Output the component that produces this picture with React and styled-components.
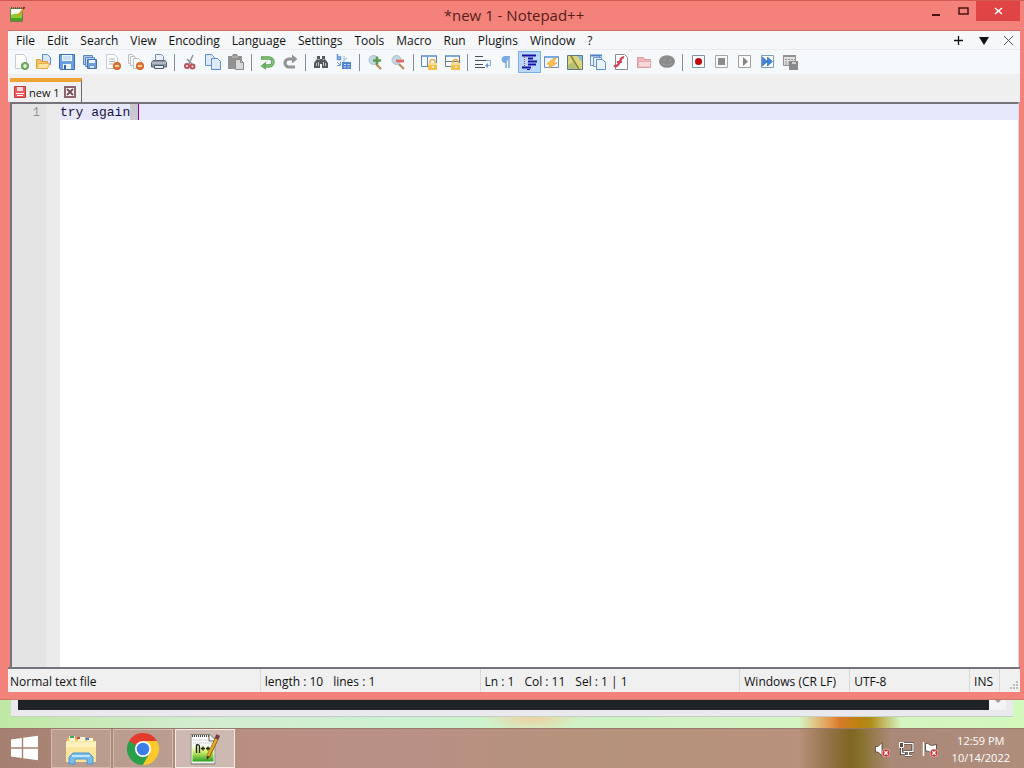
import React from 'react';
import styled, { createGlobalStyle, css } from 'styled-components';

const GlobalStyle = createGlobalStyle`
  * { box-sizing: border-box; }
  body {
    margin: 0;
    font-family: "Open Sans", "Noto Sans", sans-serif;
    font-size: 12px;
    color: #111;
  }
  button, textarea {
    font: inherit;
    color: inherit;
    margin: 0;
    padding: 0;
    border: 0;
    background: none;
  }
`;

/* ---------- desktop and window frame ---------- */

const Desktop = styled.div`
  display: flex;
  flex-direction: column;
  min-height: 100vh;
`;

const AppWindow = styled.main`
  flex: 1;
  display: flex;
  flex-direction: column;
  padding: 0 4px 7px 8px;
  background: #f3837a;
  border-top: 1px solid #cf5b52;
  border-bottom: 1px solid #cb7a68;
`;

const TitleBar = styled.header`
  display: grid;
  grid-template-columns: 1fr auto 1fr;
  height: 30px;
  border-bottom: 1px solid #cb6f66;
`;

const AppIcon = styled.span`
  display: flex;
  padding: 5px 0 0 1px;
`;

const Title = styled.h1`
  margin: 0;
  font-size: 15px;
  line-height: 28px;
  font-weight: 400;
  color: #551e1a;
`;

const WindowControls = styled.div`
  display: flex;
  justify-content: flex-end;
  align-items: flex-start;
`;

const WindowButton = styled.button`
  display: grid;
  place-items: center;
  width: ${(p) => (p.$close ? 44 : 27)}px;
  height: 20px;
  background: ${(p) => (p.$close ? '#e04444' : 'transparent')};
`;

/* ---------- menu, toolbar, tabs ---------- */

const MenuBar = styled.nav`
  display: flex;
  height: 19px;
  padding-left: 2px;
  background: #f6f7f8;
  border-bottom: 1px solid #e9ebee;
`;

const MenuItem = styled.button`
  padding: 0 6px;
  line-height: 20px;
`;

const MenuActions = styled.div`
  display: flex;
  margin-left: auto;
`;

const MenuAction = styled.button`
  display: grid;
  place-items: center;
  width: 25px;
`;

const Toolbar = styled.div`
  display: flex;
  align-items: center;
  height: 24px;
  padding-left: 2px;
  background: #f5f9fb;
`;

const ToolButton = styled.button`
  display: grid;
  place-items: center;
  width: 23px;
  height: 22px;
  padding-right: 1px;
  border: 1px solid transparent;
  ${(p) =>
    p.$pressed &&
    css`
      border-color: #79aee8;
      background: #b9d7fb;
    `}
`;

const ToolSeparator = styled.span`
  width: 8px;
  height: 17px;
  background: linear-gradient(#8a8d90, #8a8d90) 3px 0 / 1px 100% no-repeat;
`;

const TabBar = styled.div`
  display: flex;
  align-items: flex-end;
  height: 28px;
  padding-left: 2px;
  background: #efefef;
`;

const Tab = styled.div`
  display: flex;
  align-items: center;
  gap: 4px;
  height: 24px;
  padding: 0 5px 0 4px;
  background: #f1f1f1;
  border-top: 4px solid #f0a233;
  border-right: 1px solid #66686c;
  font-size: 11px;
`;

const TabLabel = styled.button`
  display: flex;
  align-items: center;
  gap: 3px;
`;

const TabClose = styled.button`
  display: flex;
`;

/* ---------- editor ---------- */

const EditorFrame = styled.section`
  flex: 1;
  display: flex;
  margin: 0 1px 0 2px;
  border: solid #74747a;
  border-width: 2px 1px 0 2px;
  border-right-color: #dcdcdc;
  background: #fff;
`;

const Gutter = styled.div`
  display: flex;
  width: 48px;
  padding-top: 1px;
  background: linear-gradient(90deg, #e4e4e4 34px, #ebebeb 34px);
  font-family: "Liberation Mono", monospace;
  font-size: 12px;
  line-height: 16px;
  color: #949494;
`;

const LineNumbers = styled.span`
  width: 28px;
  text-align: right;
`;

const TextPane = styled.div`
  position: relative;
  flex: 1;
  display: flex;
  font-family: "Liberation Mono", monospace;
  font-size: 13px;
  line-height: 16px;
  background: linear-gradient(#e8e8fd, #e8e8fd) top / 100% 16px no-repeat;
`;

const Selection = styled.span`
  position: absolute;
  top: 0;
  left: 9ch;
  width: 1ch;
  height: 16px;
  background: #c8c8ce;
`;

const Caret = styled.span`
  position: absolute;
  top: 0;
  left: 10ch;
  width: 1px;
  height: 16px;
  background: #8a00b0;
`;

const TextArea = styled.textarea`
  position: relative;
  flex: 1;
  padding-top: 1px;
  resize: none;
  outline: none;
  color: #15153a;
  caret-color: transparent;
`;

/* ---------- status bar ---------- */

const StatusBar = styled.footer`
  display: flex;
  height: 25px;
  background: #f0f0f0;
  border-top: 2px solid #74747a;
`;

const StatusPane = styled.span`
  display: flex;
  gap: 10px;
  width: ${(p) => p.$width}px;
  padding-left: ${(p) => (p.$grow ? 2 : 4)}px;
  line-height: 25px;
  white-space: nowrap;
  ${(p) => p.$grow && 'flex: 1 1 auto;'}
  border-right: 1px solid #dadada;
`;

const SizeGrip = styled.span`
  display: flex;
  justify-content: flex-end;
  align-items: flex-end;
  width: 20px;
`;

/* ---------- window behind ---------- */

const Backdrop = styled.div`
  height: 28px;
  padding: 0 11px;
  background:
    radial-gradient(ellipse 50px 14px at 52% 18px, #efd0a0, transparent),
    linear-gradient(90deg, transparent 78%, #e49a50 81%, #d87a28 82%, #b98410 84%, #b08c18 85%, transparent 88%),
    linear-gradient(90deg, #bfe8a4, #d3ecd0 20%, #cdf2d2 40%, #cff3c4 60%, #d6f5c4 80%, #d2f8bc);
`;

const RearWindow = styled.div`
  display: flex;
  height: 17px;
  padding: 0 7px 6px;
  background: #eae9ee;
  border-bottom: 1px solid #c6cdc6;
`;

const RearContent = styled.div`
  flex: 1;
  background: #1f2227;
`;

const RearScroll = styled.div`
  display: flex;
  justify-content: center;
  width: 17px;
  background: #f4f4f6;
`;

/* ---------- taskbar ---------- */

const Taskbar = styled.footer`
  display: flex;
  gap: 2px;
  height: 40px;
  border-top: 1px solid #98796c;
  background:
    linear-gradient(90deg, transparent 78%, #937248 81%, #806622 83%, #85702c 84%, transparent 87%),
    linear-gradient(90deg, #a58070, #b98f82 25%, #b99084 40%, #b5927a 60%, #b9917c 80%, #a98878 88%, #b08e7c);
`;

const StartButton = styled.button`
  display: grid;
  place-items: center;
  width: 49px;
`;

const TaskButton = styled.button`
  display: grid;
  place-items: center;
  width: 60px;
  border: 1px solid ${(p) => (p.$active ? '#f3ece6' : '#d3bbae')};
  background: ${(p) => (p.$active ? '#cdb9b2' : '#bb9d8f')};
`;

const Tray = styled.div`
  display: flex;
  align-items: center;
  gap: 8px;
  margin-left: auto;
  padding-right: 14px;
`;

const TrayButton = styled.button`
  display: flex;
`;

const Clock = styled.time`
  margin-left: 6px;
  color: #fff;
  font-size: 11px;
  line-height: 17px;
  text-align: center;
`;

/* ---------- drawings ---------- */

const Svg = ({ size = 16, box = 16, children }) => (
  <svg width={size} height={size} viewBox={`0 0 ${box} ${box}`} fill="none" aria-hidden="true">
    {children}
  </svg>
);

const page = (x, y, w, h, fill = '#fff', stroke = '#5b8fd0') => (
  <path d={`M${x + 0.5} ${y + 0.5}h${w - 4}l3 3v${h - 4}h-${w - 1}z`} fill={fill} stroke={stroke} />
);

const minusBadge = (
  <>
    <circle cx="12" cy="12" r="3.8" fill="#e0702a" stroke="#b95418" strokeWidth=".6" />
    <path d="M10 12h4" stroke="#fff" strokeWidth="1.3" />
  </>
);

const lock = (
  <>
    <path d="M9 10V8a2.500 2.500 0 0 1 5 0v2" stroke="#dfb044" strokeWidth="1.500" />
    <path d="M7 9h9v7H7z" fill="#f5bf4c" />
    <path d="M7 10h9" stroke="#fbdc8c" strokeWidth="2" />
    <path d="M11 12h2v2h-2z" fill="#fff0c0" />
  </>
);

const magnifier = (
  <>
    <path d="m9 10 5 5" stroke="#b98b58" strokeWidth="2.200" />
    <circle cx="6.500" cy="6" r="4.500" fill="#c3d6e6" stroke="#b0bfcc" />
  </>
);

const icons = {
  New: (
    <>
      {page(2, 0, 12, 15, '#fff', '#c5cbd2')}
      <circle cx="12" cy="12" r="3.600" fill="#79b765" stroke="#478b3c" strokeWidth=".8" />
      <path d="M10 12h4M12 10v4" stroke="#fff" strokeWidth="1.200" />
    </>
  ),
  Open: (
    <>
      {page(6, 0, 9, 11, '#d6e7fb')}
      <path d="M.5 14.500v-9h4l1 2h6v7z" fill="#f7ca67" stroke="#dc9b32" />
      <path d="m.5 14.500 2-5h11l-2 5z" fill="#ffe39a" stroke="#e5ae4c" />
    </>
  ),
  Save: (
    <>
      <path d="M.5.5h15v15H1.500l-1-1z" fill="#6aa0e0" stroke="#3a6fb8" />
      <path d="M3 1h10v6H3z" fill="#eef6ff" />
      <path d="M4 3h8M4 5h8" stroke="#a3c7ee" />
      <path d="M4 10h8v5H4z" fill="#eaf2fb" />
      <path d="M5 11h2v4H5z" fill="#34619e" />
    </>
  ),
  'Save All': (
    <>
      <path d="M1.500 1.500h9v9h-9z" fill="#a9c9f0" stroke="#5b8acb" />
      <path d="M3.500 3.500h9v9h-9z" fill="#c0d8f5" stroke="#5b8acb" />
      <path d="M5.500 5.500h9v9h-9z" fill="#6c9edc" stroke="#4272b4" />
      <path d="M7 6h6v3H7z" fill="#f0f7ff" />
      <path d="M8 12h4v2H8z" fill="#dbe8f7" />
    </>
  ),
  Close: (
    <>
      {page(1, 0, 12, 15, '#fff', '#c5cbd2')}
      <path d="M4 5h6M4 7.500h6M4 10h4" stroke="#aeb4ba" />
      {minusBadge}
    </>
  ),
  'Close All': (
    <>
      {page(0, 0, 8, 10, '#fff', '#b9bfc6')}
      {page(2, 2, 8, 10, '#fff', '#b9bfc6')}
      {page(5, 4, 9, 11, '#fff', '#b9bfc6')}
      {minusBadge}
    </>
  ),
  Print: (
    <>
      <path d="M4.500 7V.5h6l2 2V7" fill="#e9f2fc" stroke="#6f8fb8" />
      <path d="M2 6.500h12l1.500 2v4.500H.5V8.500z" fill="#8f9aa6" stroke="#5b6673" />
      <path d="M1 9h14" stroke="#d3d9df" />
      <path d="M3.500 11.500h9v3h-9z" fill="#e2ecf7" stroke="#4e5966" />
    </>
  ),
  Cut: (
    <>
      <path d="m11 1-4 9M5 5l5 5" stroke="#8b939b" strokeWidth="1.500" />
      <circle cx="5" cy="12" r="2" stroke="#b9505a" strokeWidth="2" />
      <circle cx="10.500" cy="12.500" r="2" stroke="#b9505a" strokeWidth="2" />
    </>
  ),
  Copy: (
    <>
      {page(0, 0, 10, 12, '#dceafa')}
      {page(6, 4, 10, 12, '#dceafa')}
    </>
  ),
  Paste: (
    <>
      <path d="M0 2h4l1-2h4l1 2h4v13H0z" fill="#929292" />
      <path d="M4 3h6" stroke="#c6c6c6" />
      <path d="M7.500 5.500h5l3 3v7h-8z" fill="#d8d8d8" stroke="#8a8a8a" />
      <path d="M12.500 5.500v3h3" stroke="#8a8a8a" />
    </>
  ),
  Undo: (
    <>
      <path d="M2 4h8a3.500 3.500 0 0 1 0 8H6" stroke="#5aa252" strokeWidth="3.400" />
      <path d="M3 4h7a3.500 3.500 0 0 1 0 8H6" stroke="#97cd8b" strokeWidth="1.200" />
      <path d="M7 7.500v8.500L1.500 12z" fill="#66b05c" />
    </>
  ),
  Redo: (
    <>
      <path d="M12 5H7a3.500 3.500 0 0 0 0 8h6" stroke="#949494" strokeWidth="3.200" />
      <path d="M10 .5v9L15.500 5z" fill="#949494" />
    </>
  ),
  Find: (
    <>
      <path d="M4 2h3v3h2V2h3v3l3 4v5H9v-4H7v4H1V9l3-4z" fill="#55585d" />
      <path d="M4.500 5.500h2M9.500 5.500h2M3.500 9v3M12.500 9v3M5.500 8v4M10.500 8v4" stroke="#bcc0c5" />
    </>
  ),
  Replace: (
    <>
      <path d="M1.500 0v5.500h3V3h-3" stroke="#5a8fd6" strokeWidth="1.500" />
      <path d="M8 10V2M8 6l3-2" stroke="#92b4e0" />
      <path d="M6 8h9v7H6z" fill="#5187d2" />
      <path d="M8 10.500h2M11.500 10.500h2M8 13h2M11.500 13h2" stroke="#cfe0f6" />
      <path d="m1 8 3 3M4.500 8v3.500H1" stroke="#6a97d6" />
    </>
  ),
  'Zoom In': (
    <>
      {magnifier}
      <path d="M6 6.500h8M10 2.500v8" stroke="#5c9c4c" strokeWidth="2.600" />
    </>
  ),
  'Zoom Out': (
    <>
      {magnifier}
      <path d="M6 7h8" stroke="#e26a62" strokeWidth="2.800" />
    </>
  ),
  'Synchronize Vertical Scrolling': (
    <>
      <path d="M.5 1.500h15v11H.5zM6.500 3v9" fill="#f7fbff" stroke="#5a86ba" />
      <path d="M1 2h14" stroke="#7da8dc" strokeWidth="2" />
      {lock}
    </>
  ),
  'Synchronize Horizontal Scrolling': (
    <>
      <path d="M1.500 1.500h14v11h-14zM2 7.500h13" fill="#f7fbff" stroke="#68798e" />
      <path d="M2 2h13" stroke="#7da8dc" strokeWidth="2" />
      {lock}
    </>
  ),
  'Word Wrap': (
    <>
      <path d="M0 2.500h8M0 6.500h11M0 10.500h8M0 13.500h10" stroke="#46505c" strokeWidth="1.200" />
      <path d="M11 6.500h4.500v5H11" stroke="#7da8d8" />
      <path d="m13 9-3 2.500 3 2.500z" fill="#6796cf" />
    </>
  ),
  'Show All Characters': (
    <>
      <path d="M12 2.500H7a3 3 0 0 0 0 6h1" fill="#78a9df" stroke="#78a9df" />
      <path d="M8 2v12M11 2v12" stroke="#78a9df" strokeWidth="1.500" />
    </>
  ),
  'Indent Guide': (
    <>
      <path d="M1 1.500h14M7 4.500h5M7 7.500h9M7 10.500h8M1 13.500h9" stroke="#1414a0" strokeWidth="1.800" />
      <path d="M3.500 3v10" stroke="#c43a5e" strokeDasharray="1 1" />
      <path d="M6 15.500h3" stroke="#1414a0" />
    </>
  ),
  'User Defined Language': (
    <>
      <path d="M.5 2.500h14v11H.5z" fill="#eef5fd" stroke="#6f8fb5" />
      <path d="M1 3h13" stroke="#74a8e8" strokeWidth="2" />
      <path d="m10 4-7 6h3l-1 4 8-5H9l3-5z" fill="#ffc34e" stroke="#f0a83c" />
    </>
  ),
  'Document Map': (
    <>
      <path d="M.5 1.500h15v14H.5z" fill="#ddd67c" stroke="#5f7888" />
      <path d="M10 2h5v6z" fill="#8bbad6" />
      <path d="M1 11 6 8l4 7H1z" fill="#b3c177" />
      <path d="m4 2 6 10 2 3" stroke="#85843f" strokeWidth="1.600" />
    </>
  ),
  'Document List': (
    <>
      <path d="M.5 1.500h9v10h-9z" fill="#e5f0fc" stroke="#6d98cf" />
      <path d="M3.500 3.500h8v9h-8z" fill="#e5f0fc" stroke="#6d98cf" />
      {page(6, 5, 10, 11, '#eaf3fd')}
      <path d="M0 1.500h12" stroke="#4c82ca" strokeWidth="2" />
    </>
  ),
  'Function List': (
    <>
      {page(2, 0, 13, 16, '#fff', '#8c8c8c')}
      <path d="M11 3.500c-3-1-3 2-4.500 5S3 13 1 11.500" stroke="#cf4456" strokeWidth="2.400" />
      <path d="M4 8h5" stroke="#cf4456" strokeWidth="2" />
    </>
  ),
  'Folder as Workspace': (
    <>
      <path d="M1.500 13.500v-10h6l1 2h6v8z" fill="#f1b7bc" stroke="#dc989e" />
      <path d="m2 13 1-5.500h12L14 13z" fill="#f9d8da" stroke="#dfa0a5" strokeWidth=".7" />
    </>
  ),
  Monitoring: (
    <>
      <ellipse cx="8" cy="7.500" rx="8" ry="6.300" fill="#8b8b8b" />
      <path d="M4 6h2M10 6h2M3 9.500c3 2 7 2 10 0" stroke="#a0a0a0" />
    </>
  ),
  'Start Recording': (
    <>
      <path d="M2.500 1.500h12v12h-12z" fill="#fff" stroke="#8192a3" />
      <circle cx="8.500" cy="7.500" r="3.500" fill="#c00808" />
    </>
  ),
  'Stop Recording': (
    <>
      <path d="M2.500 1.500h12v12h-12z" fill="#fafafa" stroke="#a7a7a7" />
      <path d="M5 4h7v7H5z" fill="#8c8c8c" />
    </>
  ),
  Playback: (
    <>
      <path d="M2.500 1.500h12v12h-12z" fill="#fafafa" stroke="#a0a0a0" />
      <path d="m7 3 5 4.500L7 12z" fill="#858585" />
    </>
  ),
  'Run Macro Multiple Times': (
    <>
      <path d="M2.500 1.500h12v12h-12z" fill="#fff" stroke="#7f9bbd" />
      <path d="m3.500 3 5 4.500-5 4.500zM8.500 3l5 4.500-5 4.500z" fill="#3f86dd" stroke="#2563b5" strokeWidth=".6" />
    </>
  ),
  'Save Recorded Macro': (
    <>
      <path d="M1.500 1.500h12v10h-12z" fill="#e2e2e2" stroke="#929292" />
      <path d="M1 2h13" stroke="#929292" strokeWidth="2" />
      <path d="M3 5.500h10M3 8h5M3 10h5" stroke="#929292" strokeDasharray="2 1" />
      <path d="M7 7h9v9H7z" fill="#8a8a8a" />
      <path d="M10 8h4v2h-4z" fill="#d0d0d0" />
    </>
  ),
};

const toolGroups = [
  ['New', 'Open', 'Save', 'Save All', 'Close', 'Close All', 'Print'],
  ['Cut', 'Copy', 'Paste'],
  ['Undo', 'Redo'],
  ['Find', 'Replace'],
  ['Zoom In', 'Zoom Out'],
  ['Synchronize Vertical Scrolling', 'Synchronize Horizontal Scrolling'],
  [
    'Word Wrap', 'Show All Characters', 'Indent Guide', 'User Defined Language', 'Document Map',
    'Document List', 'Function List', 'Folder as Workspace', 'Monitoring',
  ],
  ['Start Recording', 'Stop Recording', 'Playback', 'Run Macro Multiple Times', 'Save Recorded Macro'],
];

const menus = [
  'File', 'Edit', 'Search', 'View', 'Encoding', 'Language', 'Settings',
  'Tools', 'Macro', 'Run', 'Plugins', 'Window', '?',
];

const NotepadSmall = () => (
  <Svg size={17} box={17}>
    <path d="M1.500 2.500h12v13h-12z" fill="#f6faee" stroke="#6c7a54" />
    <path d="M2 9c4-2 7-1 11-2v8H2z" fill="#8dcc2e" />
    <path d="M2 12h11v3H2z" fill="#4f9f22" />
    <path d="M2 2h11" stroke="#566044" strokeDasharray="1 1" strokeWidth="2" />
    <path d="m9 10 6-8" stroke="#d89b28" strokeWidth="2" />
    <path d="m14 3 1.500-2" stroke="#6d2e2e" strokeWidth="2" />
  </Svg>
);

const NotepadLarge = () => (
  <Svg size={32} box={32}>
    <defs>
      <linearGradient id="sheet" x1="0" y1="0" x2="0" y2="1">
        <stop offset=".35" stopColor="#fff" />
        <stop offset=".6" stopColor="#d6ef68" />
        <stop offset="1" stopColor="#189a1c" />
      </linearGradient>
    </defs>
    <path d="M2.500 2.500h18l5 5v22h-23z" fill="url(#sheet)" stroke="#f4f4f4" strokeWidth="2" />
    <path d="M2 1.500h19l5 5V31H2z" stroke="#55604c" strokeWidth=".7" />
    <path d="M3 3h17" stroke="#444" strokeDasharray="1 1" strokeWidth="2" />
    <path d="M4 7h15M4 10h19" stroke="#ccd2cc" />
    <path d="M20 2v6h6" fill="#eee" stroke="#666" />
    <path d="M7.500 20v-8q3-1 3 2v6M12 15.500h4M14 13.500v4M17 15.500h4M19 13.500v4" stroke="#1c2a16" strokeWidth="1.400" />
    <path d="m19 24 9-19" stroke="#8b641c" strokeWidth="4" />
    <path d="m19 23 9-18" stroke="#e7ac25" strokeWidth="2.400" />
    <path d="m27.500 6 1.700-4" stroke="#70414a" strokeWidth="4" />
    <path d="m17.500 27 .5-4 2.500 1z" fill="#3b2b15" />
  </Svg>
);

const Explorer = () => (
  <Svg size={32} box={32}>
    <path d="M2 5h9l2 2h16v22H2z" fill="#e8c565" />
    <path d="M4 3h6v5H4zM13 4h7v5h-7zM22 5h6v5h-6z" fill="#fff6d2" />
    <path d="M5 3h4v2H5z" fill="#3aa84c" />
    <path d="M12 4h3v2h-3z" fill="#d64c3a" />
    <path d="M21 5h3v2h-3z" fill="#3c86cf" />
    <path d="M1 8h30v21H1z" fill="#f9e69c" />
    <path d="M1 9h30v5H1z" fill="#fcf0bc" />
    <path d="M4 31v-7l4-4h16l4 4v7h-6v-5H10v5z" fill="#78bdea" stroke="#4a96cf" />
    <path d="M7 23h18" stroke="#c0e4f9" strokeWidth="2" />
  </Svg>
);

const Chrome = () => (
  <Svg size={32} box={32}>
    <path d="M16 16 2.140 8A16 16 0 0 1 29.860 8z" fill="#e33b2e" />
    <path d="M16 16 29.860 8A16 16 0 0 1 16 32z" fill="#fcc92a" />
    <path d="M16 16V32A16 16 0 0 1 2.140 8z" fill="#2c9f4b" />
    <path d="M16 8h13.860L22.930 20z" fill="#fcc92a" />
    <path d="M22.930 20 16 32 9.070 20z" fill="#2c9f4b" />
    <path d="M2.140 8 9.070 20 16 8z" fill="#2c9f4b" />
    <path d="M2.140 8H16L9.070 12z" fill="#e33b2e" />
    <path d="M22.930 20 16 32h2l10-8z" fill="#fcc92a" />
    <circle cx="16" cy="16" r="8" fill="#fff" />
    <circle cx="16" cy="16" r="6.300" fill="#3b7de9" />
  </Svg>
);

const WindowsLogo = () => (
  <Svg size={28} box={28}>
    <path d="M0 4.500 10.800 3v9.300H0zM12.200 2.800 27 .8v11.500H12.200zM0 13.700h10.800V23L0 21.500zM12.200 13.700H27v11.500l-14.800-2z" fill="#fff" />
  </Svg>
);

const errorBadge = (
  <>
    <circle cx="12" cy="12" r="4" fill="#c93436" stroke="#f3dada" strokeWidth=".6" />
    <path d="m10.300 10.300 3.400 3.400M13.700 10.300l-3.400 3.400" stroke="#fff" strokeWidth="1.300" />
  </>
);

const trayIcons = [
  ['Speakers', <><path d="M1.500 5.500H4L8 1.500v13L4 11H1.500z" fill="#fff" stroke="#4a3d35" strokeWidth=".8" />{errorBadge}</>],
  ['Network', (
    <>
      <path d="M5.500 2.500h9.500v8H5.500M10.500 11v3M7 14.500h7M3.500 6v6.500H8" stroke="#3f342e" strokeWidth="3" />
      <path d="M6 2.500h9v8H5.500M10.500 11v3M7 14.500h7M3.500 6v6.500H7" stroke="#fff" strokeWidth="1.300" />
      <path d="M1.500 1.500h4v5h-4z" fill="#5a4c44" stroke="#fff" />
    </>
  )],
  ['Action Center', (
    <>
      <path d="M1.500 1v14" stroke="#fff" strokeWidth="1.500" />
      <path d="M3.500 2.500c3-1 4 2 6 2s3-1 5-1v7c-3 0-3 1-5 1s-3-2-6-1.500z" fill="#fff" stroke="#4a3d35" strokeWidth=".8" />
      {errorBadge}
    </>
  )],
];

export default function App() {
  return (
    <Desktop>
      <GlobalStyle />
      <AppWindow>
        <TitleBar>
          <AppIcon><NotepadSmall /></AppIcon>
          <Title>*new 1 - Notepad++</Title>
          <WindowControls>
            <WindowButton aria-label="Minimize">
              <Svg><path d="M4 11h8v2H4z" fill="#4a1612" /></Svg>
            </WindowButton>
            <WindowButton aria-label="Maximize">
              <Svg><path d="M4 5h9v6H4z" stroke="#4a1612" strokeWidth="1.500" /></Svg>
            </WindowButton>
            <WindowButton $close aria-label="Close">
              <Svg><path d="m5 5 7 6M12 5l-7 6" stroke="#fff" strokeWidth="1.600" /></Svg>
            </WindowButton>
          </WindowControls>
        </TitleBar>

        <MenuBar aria-label="Menu">
          {menus.map((name) => <MenuItem key={name}>{name}</MenuItem>)}
          <MenuActions>
            <MenuAction aria-label="New tab">
              <Svg><path d="M4 8.500h9M8.500 4v9" stroke="#111" strokeWidth="1.300" /></Svg>
            </MenuAction>
            <MenuAction aria-label="Tab list">
              <Svg><path d="M4 5h10l-5 8z" fill="#111" /></Svg>
            </MenuAction>
            <MenuAction aria-label="Close tab">
              <Svg><path d="m4 4 9 9M13 4l-9 9" stroke="#555" /></Svg>
            </MenuAction>
          </MenuActions>
        </MenuBar>

        <Toolbar role="toolbar" aria-label="Tools">
          {toolGroups.map((group, i) => (
            <React.Fragment key={group[0]}>
              {i > 0 && <ToolSeparator />}
              {group.map((name) => (
                <ToolButton key={name} aria-label={name} $pressed={name === 'Indent Guide'}>
                  <Svg>{icons[name]}</Svg>
                </ToolButton>
              ))}
            </React.Fragment>
          ))}
        </Toolbar>

        <TabBar>
          <Tab>
            <TabLabel>
              <Svg size={12} box={12}>
                <path d="M.5.5h11v11H.5z" fill="#ee5b5b" stroke="#c23c3c" />
                <path d="M3 1h6v4H3z" fill="#fbdcdc" />
                <path d="M2 7.500h8M3 9.500h6" stroke="#fff" />
              </Svg>
              new 1
            </TabLabel>
            <TabClose aria-label="Close new 1">
              <Svg size={12} box={12}>
                <path d="M1 1h10v10H1z" fill="#fff" stroke="#8c6670" strokeWidth="2" />
                <path d="m3 3 6 6M9 3 3 9" stroke="#7d4c58" strokeWidth="2" />
              </Svg>
            </TabClose>
          </Tab>
        </TabBar>

        <EditorFrame>
          <Gutter><LineNumbers>1</LineNumbers></Gutter>
          <TextPane>
            <Selection />
            <TextArea aria-label="new 1" defaultValue="try again " spellCheck={false} />
            <Caret />
          </TextPane>
        </EditorFrame>

        <StatusBar>
          <StatusPane $width={253} $grow>Normal text file</StatusPane>
          <StatusPane $width={220}><span>length : 10</span><span>lines : 1</span></StatusPane>
          <StatusPane $width={260}><span>Ln : 1</span><span>Col : 11</span><span>Sel : 1 | 1</span></StatusPane>
          <StatusPane $width={110}>Windows (CR LF)</StatusPane>
          <StatusPane $width={120}>UTF-8</StatusPane>
          <StatusPane $width={30}>INS</StatusPane>
          <SizeGrip>
            <Svg size={12} box={12}>
              <path d="M8 1h2v2H8zM5 4h2v2H5zM8 4h2v2H8zM2 7h2v2H2zM5 7h2v2H5zM8 7h2v2H8z" fill="#bcbcbc" />
            </Svg>
          </SizeGrip>
        </StatusBar>
      </AppWindow>

      <Backdrop>
        <RearWindow>
          <RearContent />
          <RearScroll>
            <Svg size={8} box={8}><path d="m1 0 3 3 3-3z" fill="#9a9aa0" /></Svg>
          </RearScroll>
        </RearWindow>
      </Backdrop>

      <Taskbar>
        <StartButton aria-label="Start"><WindowsLogo /></StartButton>
        <TaskButton aria-label="File Explorer"><Explorer /></TaskButton>
        <TaskButton aria-label="Google Chrome"><Chrome /></TaskButton>
        <TaskButton $active aria-label="Notepad++"><NotepadLarge /></TaskButton>
        <Tray>
          {trayIcons.map(([name, art]) => (
            <TrayButton key={name} aria-label={name}><Svg>{art}</Svg></TrayButton>
          ))}
          <Clock>12:59 PM<br />10/14/2022</Clock>
        </Tray>
      </Taskbar>
    </Desktop>
  );
}
